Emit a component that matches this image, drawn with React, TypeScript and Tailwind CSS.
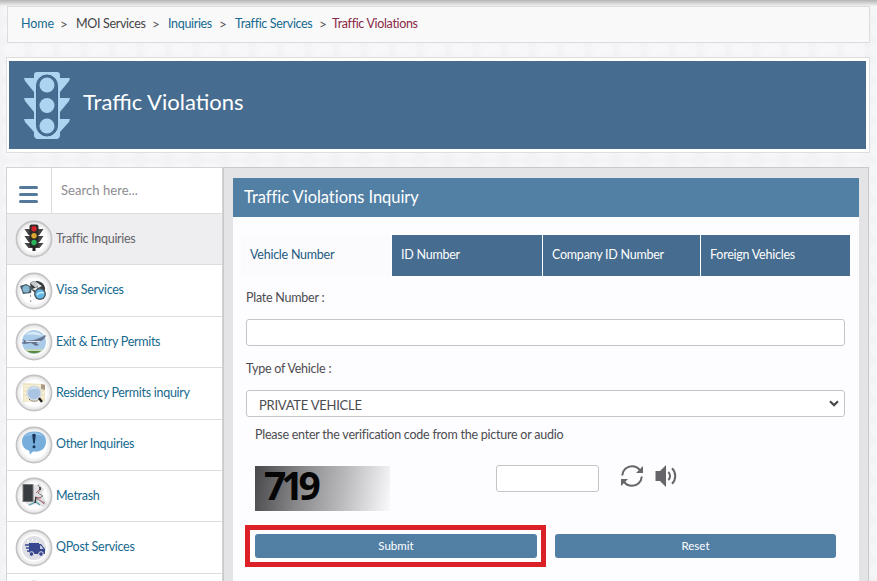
import React, { useState } from 'react';

const crumbs = [
  { label: 'Home', box: 'w-[40px]', color: 'text-[#16698f]' },
  { label: 'MOI Services', box: 'w-[77px]', color: 'text-[#444]' },
  { label: 'Inquiries', box: 'w-[52px]', color: 'text-[#16698f]' },
  { label: 'Traffic Services', box: 'w-[85px]', color: 'text-[#16698f]' },
  { label: 'Traffic Violations', box: 'w-[90px]', color: 'text-[#8a2846]' },
];

const tabs = [
  { label: 'Vehicle Number', box: 'w-[151px]' },
  { label: 'ID Number', box: 'w-[151px]' },
  { label: 'Company ID Number', box: 'w-[158px]' },
  { label: 'Foreign Vehicles', box: 'w-[149px]' },
];

function TrafficIcon() {
  return (
    <g>
      <path d="M9.5 9h19l-4 6h-11zM9.5 16h19l-4 6h-11zM9.5 23h19l-4 5h-11z" fill="#454545" />
      <rect x="14.5" y="4.5" width="9" height="23" rx="2" fill="#2b2b2b" />
      <path d="M17.5 27h3v4h-3z" fill="#222" />
      <circle cx="19" cy="8.8" r="2.7" fill="#d3212c" />
      <circle cx="19" cy="15.8" r="2.7" fill="#dfa42c" />
      <circle cx="19" cy="22.5" r="2.7" fill="#2bb35a" />
    </g>
  );
}

function VisaIcon() {
  return (
    <g>
      <path d="M15 11c5-4 14-2 15 5v8l-4 3-10-10z" fill="#3a3d40" />
      <path d="M15 11l5-2 4 3-3 4z" fill="#c4c9cc" />
      <path d="M5 14l6-2 6 3-1 6-8 1z" fill="#4c5d68" />
      <circle cx="11" cy="17" r="3.6" fill="#83b7d2" />
      <path d="M22 11l5 3-4 2zM17 17l6-2-2 4z" fill="#e9edef" />
      <circle cx="25" cy="22" r="6" fill="#4f5b62" />
      <circle cx="25" cy="22" r="4.5" fill="#63b8e8" />
      <path d="M22 23c2-3 4-3 7-2" stroke="#c5ecff" strokeWidth="1.5" fill="none" />
      <path d="M15 23h1v2h-1zM15 28l2 1-2 1z" fill="#999" />
    </g>
  );
}

function PlaneIcon() {
  return (
    <g>
      <circle cx="19" cy="19" r="12" fill="#a9cbea" />
      <path d="M10 12c5-5 13-4 18 1-6-1-12-2-18-1z" fill="#d8e9f5" />
      <path d="M9 26h20c-5 6-15 6-20 0z" fill="#c6d6bd" />
      <path d="M12 28h14c-4 3-10 3-14 0z" fill="#5d8a3f" />
      <path d="M8 16l3 2 8-1 8-3 3-2 1 1-3 4-7 3 3 2-3 1-5-3-7 1-3-1 3-1z" fill="#66748f" />
      <path d="M11 18.5h14" stroke="#dde4ee" strokeWidth="1" />
    </g>
  );
}

function ResidencyIcon() {
  return (
    <g>
      <path d="M8 9l22 1v17l-22 1z" fill="#efe5c2" />
      <path d="M9 12h19M9 15h19M9 19h20M9 23h20M9 26h18" stroke="#fff9e4" strokeWidth="1.2" />
      <path d="M26 10l4 1v5l-4-1z" fill="#a99a8c" />
      <circle cx="19" cy="19" r="7" fill="#a9c4e3" stroke="#d8dde2" strokeWidth="1.5" />
      <path d="M14 17c2-4 6-5 9-2-3-1-6-1-9 2z" fill="#dceaf6" />
      <path d="M14 25c3 3 8 3 10 0" stroke="#333" strokeWidth="1" fill="none" strokeDasharray="1 1" />
      <path d="M24 24l3 4" stroke="#262626" strokeWidth="2.3" />
    </g>
  );
}

function OtherIcon() {
  return (
    <g>
      <path d="M19 5.5c-7 0-12 4-12 10 0 5 3 8 7 9l1 4 3-3c8 1 13-3 13-10S26 5.5 19 5.5z" fill="#78aedb" />
      <path d="M9 11c3-5 15-7 20 0-5-3-14-3-20 0z" fill="#96c3e7" />
      <path d="M17.2 8.5q1.8-1.5 3.6 0l-1 9h-1.600z" fill="#17365a" />
      <circle cx="19" cy="20.800" r="1.5" fill="#17365a" />
    </g>
  );
}

function MetrashIcon() {
  return (
    <g>
      <path d="M18 9l6-3 5 6-2 5 6 11-5 2-7-3-7 2-4-4 8-2z" fill="#dfe1e4" />
      <path d="M23 8l3 4-3 4 5 3-6 3 8 4" stroke="#8b7d7d" strokeWidth="1" fill="none" />
      <path d="M21 16l4-4M20 20l6 1M25 23l4 4" stroke="#bd626d" strokeWidth="1" />
      <path d="M14 28l7-3 4 3" stroke="#57a3aa" strokeWidth="1.2" fill="none" />
      <rect x="7.5" y="7" width="11" height="18" fill="#777" />
      <rect x="8.5" y="8" width="9" height="16" fill="#393c40" />
      <path d="M21 20l-1 6M25 10v3" stroke="#333" strokeWidth="1.5" />
    </g>
  );
}

function QPostIcon() {
  return (
    <g>
      <circle cx="19" cy="19" r="12" fill="#dedfe5" />
      <path d="M14 14h10v11h-10zM23 15h3l4 5v5h-7z" fill="#36478f" />
      <path d="M25 16.500h1l2.500 3.500h-3.500z" fill="#c3cae1" />
      <path d="M10 16h5M11 19h5M12 22h4" stroke="#36478f" strokeWidth="1.5" />
      <circle cx="16.500" cy="25" r="2.300" fill="#36478f" stroke="#dedfe5" />
      <circle cx="26" cy="25" r="2.300" fill="#36478f" stroke="#dedfe5" />
      <path d="M12 12h2M17 11h1M21 12h1" stroke="#fff" strokeWidth="1.5" />
    </g>
  );
}

const services = [
  { label: 'Traffic Inquiries', icon: <TrafficIcon /> },
  { label: 'Visa Services', icon: <VisaIcon /> },
  { label: 'Exit & Entry Permits', icon: <PlaneIcon /> },
  { label: 'Residency Permits inquiry', icon: <ResidencyIcon /> },
  { label: 'Other Inquiries', icon: <OtherIcon /> },
  { label: 'Metrash', icon: <MetrashIcon /> },
  { label: 'QPost Services', icon: <QPostIcon /> },
  { label: '', icon: null },
];

function ServiceBadge({ children }: { children: React.ReactNode }) {
  return (
    <svg width="38" height="38" viewBox="0 0 38 38" className="shrink-0">
      <circle cx="19" cy="19" r="17.6" fill="#e9e8e9" stroke="#c3c2c4" strokeWidth="1.6" />
      <circle cx="19" cy="19" r="14.5" fill="#fff" stroke="#f3f2f3" strokeWidth="2" />
      {children}
    </svg>
  );
}

function BannerLight() {
  return (
    <svg width="46" height="67" viewBox="0 0 46 67">
      <path d="M13 0h20q3 0 3 3v3h10l-1 3-9 11v6h10l-1 3-9 11v7h10l-1 3-9 10v3q0 3-3 4H13q-3-1-3-4v-3L1 50l-1-3h10v-7L1 29l-1-3h10v-6L1 9 0 6h10V3q0-3 3-3z" fill="#abd5f1" />
      <rect x="12.5" y="3" width="21" height="61" rx="10.5" fill="#466c8f" stroke="#3f668a" strokeWidth="1" />
      <circle cx="23" cy="13" r="7.5" fill="#abd5f1" />
      <circle cx="23" cy="33.5" r="7.5" fill="#abd5f1" />
      <circle cx="23" cy="54" r="7.5" fill="#abd5f1" />
    </svg>
  );
}

export default function App() {
  const [activeTab, setActiveTab] = useState('Vehicle Number');
  const [plate, setPlate] = useState('');
  const [code, setCode] = useState('');

  function handleReset() {
    setPlate('');
    setCode('');
  }

  return (
    <div className="h-[581px] w-[877px] overflow-hidden bg-[#f4f3f5] bg-[radial-gradient(ellipse_at_center,#f8f7f9_0%,#f6f5f7_55%,#f3f2f4_65%)] bg-[length:28px_20px] font-['Lato',sans-serif] text-[13px] text-[#4c4c50]">
      <div className="h-[6px] bg-gradient-to-b from-[#b5b5b6] to-[#f1f1f2]" />

      <nav className="ml-[7px] flex h-[37px] w-[863px] items-center border border-[#dcdbdd] bg-[#faf9fa] pl-[13px] text-[12.5px] tracking-[-0.33px]">
        {crumbs.map((crumb, i) => (
          <React.Fragment key={crumb.label}>
            <span className={`${crumb.box} ${crumb.color} shrink-0 whitespace-nowrap ${i === 0 ? 'tracking-[-0.1px]' : ''}`}>{crumb.label}</span>
            {i < crumbs.length - 1 && (
              <span className={`${i === 3 ? 'w-[12px]' : 'w-[15px]'} shrink-0 text-[#555]`}>
                <span className="-ml-px text-[13.5px]">&gt;</span>
              </span>
            )}
          </React.Fragment>
        ))}
      </nav>

      <header className="mt-[14px] ml-[6px] h-[96px] w-[864px] border border-[#dedde0] bg-white px-[2px] py-[3px]">
        <div className="flex h-[88px] w-[857px] items-center bg-[#466c8f] pl-[15px]">
          <BannerLight />
          <h1 className="ml-[13px] pb-[7px] text-[22px] text-white">Traffic Violations</h1>
        </div>
      </header>

      <main className="mt-[14px] ml-[6px] flex">
        <aside className="h-[420px] w-[217px] shrink-0 border border-[#d4d3d6] bg-white">
          <div className="flex h-[46px] border-b border-[#dddcdf]">
            <button className="flex w-[45px] shrink-0 flex-col items-start gap-[4px] border-r border-[#dddcdf] pt-[18px] pl-[12px]" aria-label="Menu">
              <span className="h-[3px] w-[19px] rounded-sm bg-[#55799b]" />
              <span className="h-[3px] w-[19px] rounded-sm bg-[#55799b]" />
              <span className="h-[3px] w-[19px] rounded-sm bg-[#55799b]" />
            </button>
            <input className="min-w-0 flex-1 pt-px pl-[9px] tracking-[0.05px] outline-none placeholder:text-[#8c8c8f]" placeholder="Search here..." />
          </div>
          {services.map((service, i) => (
            <a
              key={service.label}
              className={`flex h-[51.4px] items-center border-b border-[#dddcdf] pl-[8px] ${i === 0 ? 'bg-[#eeedef] text-[#65656a]' : 'text-[#16698f]'}`}
            >
              <ServiceBadge>{service.icon}</ServiceBadge>
              <span className="ml-[3px] text-[12.5px] tracking-[-0.29px]">{service.label}</span>
            </a>
          ))}
        </aside>

        <section className="h-[420px] w-[646px] border border-[#c9c8cb] bg-[#e4e3e5] px-[9px] pt-[10px]">
          <h2 className="flex h-[39px] items-center bg-[#5280a5] pb-[1px] pl-[11px] text-[16.5px] tracking-[-0.04px] text-white">Traffic Violations Inquiry</h2>
          <div className="h-[380px] bg-[#fdfcfe] pt-[18px] tracking-[-0.24px]">
            <div className="ml-[8px] flex h-[41px]">
              {tabs.map((tab) => (
                <button
                  key={tab.label}
                  onClick={() => setActiveTab(tab.label)}
                  className={`${tab.box} shrink-0 border-r border-white pl-[9px] text-left text-[12.5px] last:border-r-0 ${activeTab === tab.label ? 'bg-[#fbfafc] text-[#245b82]' : 'bg-[#466c8f] text-white'}`}
                >
                  {tab.label}
                </button>
              ))}
            </div>

            <form className="flex flex-col pr-[14px] pl-[13px]" onSubmit={(e) => e.preventDefault()}>
              <label className="mt-[13px] h-[18px] text-[12.5px] leading-[18px]">Plate Number :</label>
              <input
                className="mt-[12px] h-[27px] rounded-[3px] border border-[#c5c4c8] bg-white px-3 outline-none"
                value={plate}
                onChange={(e) => setPlate(e.target.value)}
              />
              <label className="mt-[14px] h-[18px] text-[12.5px] leading-[18px]">Type of Vehicle :</label>
              <button type="button" className="mt-[12px] flex h-[27px] items-center justify-between rounded-[3px] border border-[#c5c4c8] bg-white pr-[5px] pl-[12px]">
                <span className="pt-[5px]">PRIVATE VEHICLE</span>
                <svg width="10" height="7" viewBox="0 0 10 7">
                  <path d="M1 1.200l4 3.900 4-3.900" fill="none" stroke="#4a4a4d" strokeWidth="2.200" />
                </svg>
              </button>
              <p className="mt-[9px] ml-[9px] h-[18px] text-[12.5px] leading-[18px]">Please enter the verification code from the picture or audio</p>

              <div className="mt-[21px] ml-[9px] flex h-[46px] items-start">
                <div className="mt-px h-[45px] w-[135px] bg-[linear-gradient(100deg,#48474a_0%,#8b8a8c_35%,#bab9bb_65%,#faf9fb_100%)] pl-[9px] font-['Open_Sans',sans-serif] text-[39px] leading-[38px] font-bold tracking-[-5px] text-[#050505]">
                  719
                </div>
                <input
                  className="ml-[106px] h-[27px] w-[103px] rounded-[3px] border border-[#c5c4c8] bg-white px-2 outline-none"
                  value={code}
                  onChange={(e) => setCode(e.target.value)}
                />
                <svg width="22" height="22" viewBox="0 0 22 22" className="ml-[22px]">
                  <path d="M1.2 10.5C1.5 5 6 1.2 11 1.2c3.6 0 6.5 1.7 8.2 4.4M20.8 11.5C20.5 17 16 20.8 11 20.8c-3.6 0-6.5-1.700-8.200-4.400" fill="none" stroke="#666569" strokeWidth="2" />
                  <path d="M22 1v7h-7zM0 21v-7h7z" fill="#666569" />
                </svg>
                <svg width="22" height="22" viewBox="0 0 22 22" className="ml-[12px]">
                  <path d="M0.5 6H5l6-6v22l-6-6H0.500z" fill="#666569" />
                  <path d="M13.3 7c2.3 2 2.3 6 0 8M17 3.2c4.3 4 4.3 11.600 0 15.600" fill="none" stroke="#666569" strokeWidth="2" />
                </svg>
              </div>

              <div className="mt-[14px] -ml-px flex tracking-normal">
                <div className="h-[42px] w-[301px] border-[5px] border-[#dc2027] bg-white pt-[4px] pl-[5px]">
                  <button className="block h-[24px] w-[282px] rounded-[3px] bg-[#5280a5] pb-px text-[11.5px] text-white">Submit</button>
                </div>
                <button type="button" onClick={handleReset} className="mt-[9px] ml-[9px] h-[24px] w-[281px] rounded-[3px] bg-[#5280a5] pb-px text-[11.5px] text-white">
                  Reset
                </button>
              </div>
            </form>
          </div>
        </section>
      </main>
    </div>
  );
}
